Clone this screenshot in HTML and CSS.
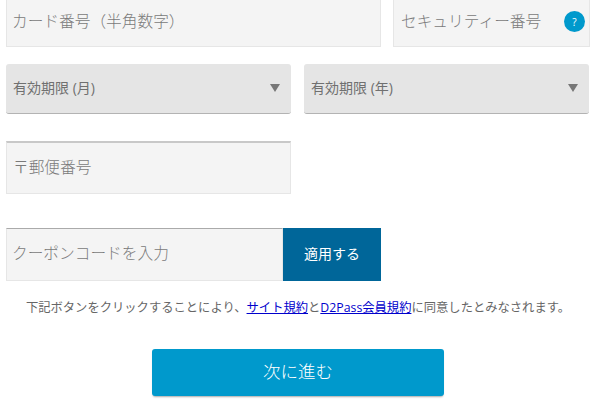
FILE: index.html
```html
<!DOCTYPE html>
<html lang="ja">
<head>
  <meta charset="UTF-8">
  <meta name="viewport" content="width=device-width, initial-scale=1.0">
  <title>お支払い情報</title>
  <link rel="stylesheet" href="styles.css">
</head>
<body>
  <form class="payment-form">
    <div class="row row-card">
      <div class="field field-number">カード番号（半角数字）</div>
      <div class="field field-cvv">
        <span>セキュリティー番号</span>
        <span class="help">?</span>
      </div>
    </div>
    <div class="row row-expiry">
      <div class="select">
        <span>有効期限 (月)</span>
        <span class="arrow"></span>
      </div>
      <div class="select">
        <span>有効期限 (年)</span>
        <span class="arrow"></span>
      </div>
    </div>
    <div class="field field-zip">〒郵便番号</div>
    <div class="coupon">
      <div class="field field-coupon">クーポンコードを入力</div>
      <button type="button" class="coupon-btn">適用する</button>
    </div>
    <p class="terms">下記ボタンをクリックすることにより、<a href="#">サイト規約</a>と<a href="#">D2Pass会員規約</a>に同意したとみなされます。</p>
    <div class="next-wrap">
      <button type="button" class="next-btn">次に進む</button>
    </div>
  </form>
</body>
</html>
```

FILE: styles.css
```css
html, body {
  height: 405px;
  overflow: hidden;
}

body {
  font-family: 'Open Sans', 'Noto Sans CJK JP', sans-serif;
  font-weight: 300;
  background-color: #fff;
  margin: 0;
  color: #777;
}

.payment-form {
  padding-left: 6px;
  width: 584px;
}

.row {
  display: flex;
}

.field {
  display: flex;
  align-items: center;
  box-sizing: border-box;
  background-color: #f4f4f4;
  border: 1px solid #e6e6e6;
  font-size: 15.7px;
  padding: 0 0 4px 5px;
  color: #7a7a7a;
}

.row-card {
  gap: 12px;
  height: 47px;
}

.row-card .field {
  border-top: none;
  padding-bottom: 6px;
}

.field-number {
  width: 375px;
}

.row-card .field-cvv {
  width: 197px;
  justify-content: space-between;
  padding: 0 4px 3px 7px;
}

.field-cvv span:first-child {
  margin-bottom: 3px;
}

.help {
  display: flex;
  align-items: center;
  justify-content: center;
  width: 21px;
  height: 21px;
  border-radius: 50%;
  background-color: #0099cc;
  color: #fff;
  font-size: 10px;
  font-weight: 400;
}

.row-expiry {
  gap: 13px;
  margin-top: 17px;
}

.select {
  display: flex;
  align-items: center;
  justify-content: space-between;
  box-sizing: border-box;
  width: 285px;
  height: 50px;
  padding: 0 11px 4px 7px;
  background-color: #e5e5e5;
  border-bottom: 1px solid #b3b3b3;
  border-radius: 3px;
  font-size: 14px;
  font-weight: 400;
  color: #707070;
}

.arrow {
  width: 0;
  height: 0;
  margin-top: 3px;
  border-left: 5px solid transparent;
  border-right: 5px solid transparent;
  border-top: 8px solid #777;
}

.field-zip {
  width: 285px;
  height: 53px;
  margin-top: 27px;
  padding-left: 6px;
  border-top: 2px solid #c8c8c8;
}

.coupon {
  display: flex;
  width: 375px;
  height: 53px;
  margin-top: 34px;
}

.field-coupon {
  flex-grow: 1;
  border-top: 1px solid #aaa;
}

.coupon-btn {
  width: 98px;
  padding: 0 0 4px;
  background-color: #006699;
  color: #fff;
  border: none;
  font-family: inherit;
  font-size: 14px;
  font-weight: 400;
}

.terms {
  margin: 18px 0 0;
  font-size: 12.3px;
  font-weight: 400;
  line-height: 18px;
  text-align: center;
  color: #666;
}

.terms a {
  color: #0000cc;
}

.next-wrap {
  display: flex;
  justify-content: center;
  margin-top: 32px;
}

.next-btn {
  width: 292px;
  height: 47px;
  padding: 0 0 5px;
  background-color: #0099cc;
  color: #fff;
  border: none;
  border-radius: 3px;
  box-shadow: 0 2px 2px -1px #aaa;
  font-family: inherit;
  font-size: 17.5px;
  font-weight: 300;
}
```
